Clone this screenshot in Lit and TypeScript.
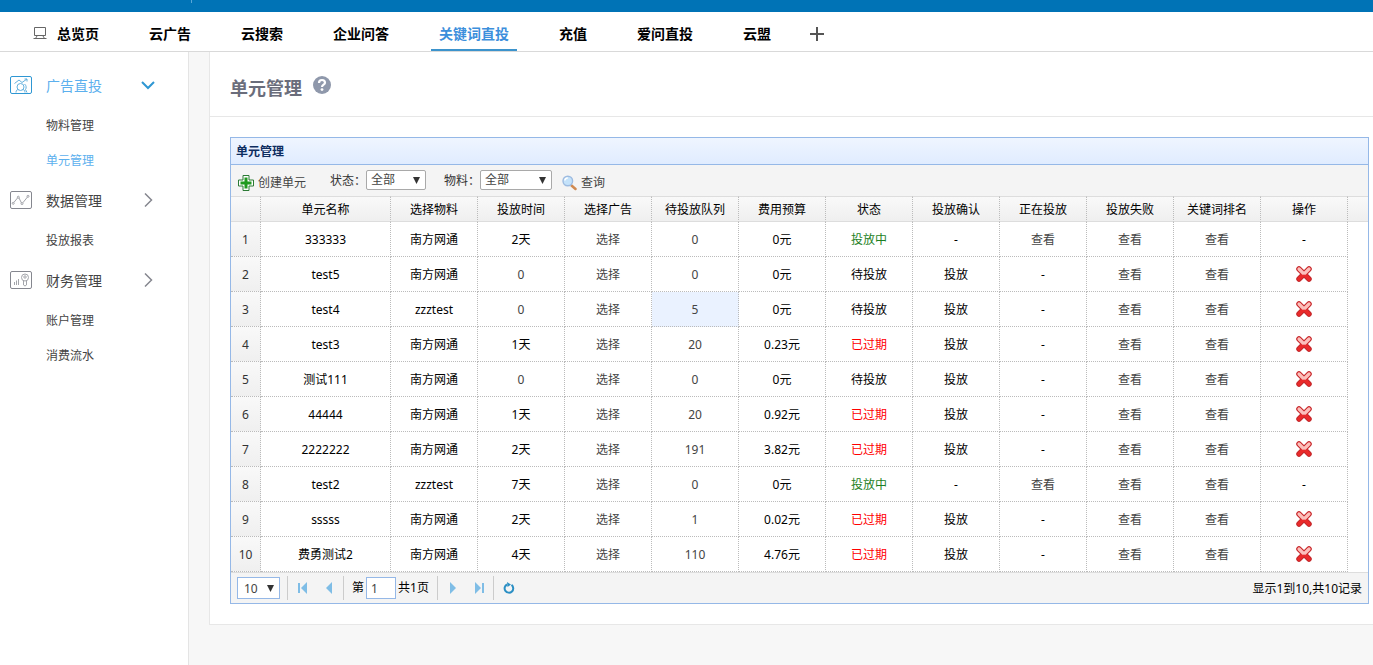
import { LitElement, html, css, svg, nothing } from "lit";
import { customElement, state } from "lit/decorators.js";
import { classMap } from "lit/directives/class-map.js";

interface Unit {
  name: string;
  material: string;
  days: string;
  queue: string;
  budget: string;
  status: "running" | "waiting" | "expired";
}

const STATUS_TEXT = { running: "投放中", waiting: "待投放", expired: "已过期" };

const UNITS: Unit[] = [
  { name: "333333", material: "南方网通", days: "2天", queue: "0", budget: "0元", status: "running" },
  { name: "test5", material: "南方网通", days: "0", queue: "0", budget: "0元", status: "waiting" },
  { name: "test4", material: "zzztest", days: "0", queue: "5", budget: "0元", status: "waiting" },
  { name: "test3", material: "南方网通", days: "1天", queue: "20", budget: "0.23元", status: "expired" },
  { name: "测试111", material: "南方网通", days: "0", queue: "0", budget: "0元", status: "waiting" },
  { name: "44444", material: "南方网通", days: "1天", queue: "20", budget: "0.92元", status: "expired" },
  { name: "2222222", material: "南方网通", days: "2天", queue: "191", budget: "3.82元", status: "expired" },
  { name: "test2", material: "zzztest", days: "7天", queue: "0", budget: "0元", status: "running" },
  { name: "sssss", material: "南方网通", days: "2天", queue: "1", budget: "0.02元", status: "expired" },
  { name: "费勇测试2", material: "南方网通", days: "4天", queue: "110", budget: "4.76元", status: "expired" },
];

const HEADERS = ["单元名称", "选择物料", "投放时间", "选择广告", "待投放队列", "费用预算", "状态", "投放确认", "正在投放", "投放失败", "关键词排名", "操作"];

const TABS = ["总览页", "云广告", "云搜索", "企业问答", "关键词直投", "充值", "爱问直投", "云盟"];

const MENU = [
  { icon: "ads", title: "广告直投", open: true, items: ["物料管理", "单元管理"] },
  { icon: "data", title: "数据管理", open: false, items: ["投放报表"] },
  { icon: "finance", title: "财务管理", open: false, items: ["账户管理", "消费流水"] },
];

const MENU_GLYPHS: Record<string, unknown> = {
  ads: svg`<path d="M4.500 7.500l4.500-3.500 3 2.500 5-3.500M14.500 3H17v2.500"/><circle cx="10.500" cy="11" r="3.500"/><path d="M6 16.500c0-2 1-3 2.500-3M12.500 13.500c1.500 0 2.500 1 2.500 3M14.500 8c2 1.500 2 4 1 5.500l1.500 3"/>`,
  data: svg`<path d="M3.800 11.500L7.500 7M9 7l2.500 5M12.800 11.800L17.500 6"/><circle cx="3.200" cy="12.300" r="1"/><circle cx="8.300" cy="6.200" r="1"/><circle cx="12" cy="12.600" r="1"/><circle cx="18" cy="5.300" r="1"/>`,
  finance: svg`<path d="M4.500 14v-3M6.500 14V9.500M8.500 14V8"/><circle cx="15" cy="6.500" r="3.500"/><circle cx="15" cy="6" r="1.200"/><path d="M13.500 9.500V14l1.500 1 1.500-1V9.500"/>`,
};

@customElement("app-root")
export class AppRoot extends LitElement {
  static styles = css`
    :host {
      display: flex;
      flex-direction: column;
      min-height: 100vh;
      background: #f7f7f7;
      color: #000;
      font: 12px/16px "Noto Sans", "Noto Sans CJK SC", sans-serif;
    }
    * { box-sizing: border-box; }
    a { color: inherit; text-decoration: none; }
    button {
      display: flex;
      align-items: center;
      padding: 0;
      border: 0;
      background: none;
      color: inherit;
      font: inherit;
      cursor: pointer;
    }
    svg { display: block; flex: none; }

    .topbar { height: 12px; padding-left: 191px; background: #0073b6; }
    .mark { width: 1px; height: 3px; background: #5aa7d8; }

    .tabs {
      display: flex;
      align-items: stretch;
      height: 40px;
      padding-left: 33px;
      border-bottom: 1px solid #d9d9d9;
      background: #fff;
      font-size: 14px;
      font-weight: 700;
    }
    .screen { align-self: center; margin-right: 2px; padding-top: 4px; }
    .tab {
      display: flex;
      align-items: center;
      margin-right: 34px;
      padding: 6px 8px 0;
      border-bottom: 2px solid transparent;
      white-space: nowrap;
    }
    .tab.current { color: #3c8fdc; border-color: #3c93cc; }
    .add { margin-left: -3px; padding-top: 4px; }

    .body { display: flex; flex: 1; }
    .side {
      flex: none;
      width: 189px;
      padding-top: 11px;
      border-right: 1px solid #e4e4e4;
      background: #fff;
      color: #444;
    }
    .group {
      display: grid;
      grid-template-columns: 22px 1fr 14px;
      gap: 14px;
      width: 100%;
      height: 45px;
      padding: 0 33px 0 10px;
      font-size: 14px;
      text-align: left;
    }
    .group.open { color: #5cb0ee; }
    .glyph, .chevron { padding-bottom: 1px; color: #85878f; }
    .marks { opacity: 0.75; }
    .open .glyph, .open .chevron { color: #2f97d3; }
    .list { margin: 0; padding: 0; list-style: none; }
    .link { display: flex; align-items: center; height: 35px; padding-left: 46px; }
    .link.current { color: #5cb0ee; }

    .main { flex: 1; min-width: 0; margin-left: 20px; }
    .card { border: 1px solid #e7e7e7; border-width: 0 0 1px 1px; background: #fff; }
    .head {
      display: flex;
      align-items: center;
      gap: 11px;
      height: 65px;
      padding: 7px 20px 0;
      border-bottom: 1px solid #e7e7e7;
    }
    .heading { margin: 0; color: #6a6d7b; font-size: 18px; line-height: 24px; }
    .help { margin-bottom: 5px; }

    .panel { margin: 20px 4px 20px 20px; border: 1px solid #95b8e7; overflow: hidden; }
    .title {
      display: flex;
      align-items: center;
      height: 27px;
      margin: 0;
      padding: 2px 0 0 5px;
      border-bottom: 1px solid #95b8e7;
      background: linear-gradient(#eff5ff, #e0ecff);
      color: #0e2d5f;
      font-size: 12px;
    }
    .tools { display: flex; align-items: center; height: 31px; padding-left: 7px; background: #f4f4f4; color: #444; }
    .tool { gap: 4px; padding-top: 4px; }
    .field { display: flex; align-items: center; color: #333; }
    .status { margin-left: 24px; }
    .material { margin: 0 10px 0 18px; }
    .pick { display: inline-grid; align-items: center; }
    .pick > * { grid-area: 1 / 1; }
    .arrow { justify-self: end; margin-right: 6px; pointer-events: none; }
    select, input {
      height: 20px;
      margin: 0;
      padding: 0 4px;
      border: 1px solid #a9a9a9;
      border-radius: 2px;
      outline: 0;
      background: #fff;
      color: #444;
      font: inherit;
      appearance: none;
    }
    .tools .pick { margin-bottom: 1px; }
    .narrow { width: 60px; }
    .wide { width: 72px; }

    .grid { width: 100%; border-collapse: separate; border-spacing: 0; table-layout: fixed; text-align: center; }
    .c-no { width: 30px; }
    .c-name { width: 130px; }
    .c-std { width: 87px; }
    th, td { padding: 2px 0 0; border-right: 1px dotted #bbb; white-space: nowrap; }
    th {
      height: 26px;
      border-top: 1px solid #ddd;
      border-bottom: 1px solid #ddd;
      background: linear-gradient(#f9f9f9, #efefef);
      font-weight: 400;
    }
    td { height: 35px; border-bottom: 1px dotted #bbb; }
    .rest { border-right: 0; }
    td.rest { border-bottom: 0; }
    .no { background: linear-gradient(#f9f9f9, #efefef); color: #333; }
    .hot { background: #eaf2ff; }
    td a, .zero { color: #444; }
    td a.strong { color: #000; }
    .running { color: #1d7f24; }
    .expired { color: #f00; }
    .remove { margin: 0 auto; padding-bottom: 2px; }

    .pager {
      display: flex;
      align-items: center;
      height: 31px;
      padding: 0 6px;
      border-top: 1px solid #ddd;
      background: #f4f4f4;
    }
    .pager select, .pager input { height: 22px; border-color: #95b8e7; border-radius: 0; }
    .pager .pick { margin-right: 6px; }
    .pager select { width: 43px; padding: 1px 0 0 6px; }
    .pager input { width: 30px; margin: 0 2px; }
    .sep { width: 1px; height: 24px; margin: 0 2px 0 1px; background: #ccc; }
    .step { justify-content: center; width: 26px; height: 26px; }
    .steps { display: flex; }
    .goto { display: flex; align-items: center; padding: 0 7px 0 6px; }
    .total { margin-left: auto; padding-top: 2px; }
  `;

  @state() private currentTab = 4;
  @state() private currentLink = "单元管理";

  private arrow() {
    return html`<svg class="arrow" width="7" height="7" viewBox="0 0 7 7" aria-hidden="true"><path d="M0 0h7L3.500 7z" fill="#333" /></svg>`;
  }

  private renderTabs() {
    return html`
      <nav class="tabs">
        <svg class="screen" width="14" height="17" viewBox="0 0 14 13" fill="none" stroke="#666" aria-hidden="true">
          <path d="M1.500 .5h11v8h-11zM.5 11.500h13M4 9l-1.500 2.500M10 9l1.500 2.500" />
        </svg>
        ${TABS.map(
          (t, i) => html`<a href="#" class=${classMap({ tab: true, current: i === this.currentTab })} @click=${() => (this.currentTab = i)}>${t}</a>`
        )}
        <button class="add" aria-label="添加">
          <svg width="14" height="14" viewBox="0 0 14 14" stroke="#555" stroke-width="2"><path d="M7 0v14M0 7h14" /></svg>
        </button>
      </nav>
    `;
  }

  private renderSide() {
    return html`
      <aside class="side">
        ${MENU.map(
          (g) => html`
            <button class=${classMap({ group: true, open: g.open })}>
              <svg class="glyph" width="22" height="19" viewBox="0 0 22 18" fill="none" stroke="currentColor" aria-hidden="true">
                <rect x=".5" y=".5" width="21" height="17" rx="1.500" />
                <g class="marks">${MENU_GLYPHS[g.icon]}</g>
              </svg>
              <span>${g.title}</span>
              <svg class="chevron" width="14" height="15" viewBox="0 0 14 14" fill="none" stroke="currentColor" stroke-width=${g.open ? 2 : 1.5} aria-hidden="true">
                <path d=${g.open ? "M1 4l6 6 6-6" : "M4 .5L10.500 7 4 13.500"} />
              </svg>
            </button>
            <ul class="list">
              ${g.items.map(
                (name) => html`<li><a href="#" class=${classMap({ link: true, current: name === this.currentLink })} @click=${() => (this.currentLink = name)}>${name}</a></li>`
              )}
            </ul>
          `
        )}
      </aside>
    `;
  }

  private renderTools() {
    return html`
      <div class="tools">
        <button class="tool">
          <svg width="16" height="16" viewBox="0 0 16 16" aria-hidden="true">
            <path d="M5 .5h6V5h4.500v6H11v4.500H5V11H.5V5H5z" fill="#fff" stroke="#2b7a35" />
            <path d="M6.500 2.500h3v4h4v3h-4v4h-3v-4h-4v-3h4z" fill="#1f9a1f" />
          </svg>
          创建单元
        </button>
        <label class="field status">状态：<span class="pick"><select class="narrow"><option>全部</option></select>${this.arrow()}</span></label>
        <label class="field material">物料：<span class="pick"><select class="wide"><option>全部</option></select>${this.arrow()}</span></label>
        <button class="tool">
          <svg width="15" height="16" viewBox="0 0 15 16" aria-hidden="true">
            <path d="M9.500 10.500l4 3.500" stroke="#d08a50" stroke-width="2.500" stroke-linecap="round" />
            <circle cx="5.800" cy="6" r="4.800" fill="#c4e2fa" stroke="#9dbbe0" stroke-width="1.400" />
            <path d="M2.800 5.500a3 3 0 0 1 3-2.500" fill="none" stroke="#fff" stroke-width="1.500" />
          </svg>
          查询
        </button>
      </div>
    `;
  }

  private renderRow(u: Unit, i: number) {
    const running = u.status === "running";
    return html`
      <tr>
        <td class="no">${i + 1}</td>
        <td>${u.name}</td>
        <td>${u.material}</td>
        <td class=${u.days === "0" ? "zero" : nothing}>${u.days}</td>
        <td><a href="#">选择</a></td>
        <td class=${i === 2 ? "hot" : nothing}><a href="#">${u.queue}</a></td>
        <td>${u.budget}</td>
        <td class=${u.status}>${STATUS_TEXT[u.status]}</td>
        <td>${running ? "-" : html`<a class="strong" href="#">投放</a>`}</td>
        <td>${running ? html`<a href="#">查看</a>` : "-"}</td>
        <td><a href="#">查看</a></td>
        <td><a href="#">查看</a></td>
        <td>
          ${running
            ? "-"
            : html`<button class="remove" aria-label="删除">
                <svg width="16" height="16" viewBox="0 0 16 16" aria-hidden="true" stroke-linecap="round">
                  <path d="M3 3l10 10M13 3L3 13" stroke="#c2272b" stroke-width="5.500" />
                  <path d="M3 3l10 10M13 3L3 13" stroke="#ea2a2a" stroke-width="3.600" />
                  <path d="M3 3l4 4M13 3L9 7" stroke="#fbc0bc" stroke-width="3.200" />
                </svg>
              </button>`}
        </td>
        <td class="rest"></td>
      </tr>
    `;
  }

  private renderPager() {
    const step = (label: string, d: string, bar: string) => html`
      <button class="step" aria-label=${label}>
        <svg width="12" height="12" viewBox="0 0 12 12" fill="#7fbde6"><path d=${d} /><path d=${bar} /></svg>
      </button>
    `;
    return html`
      <div class="pager">
        <span class="pick"><select aria-label="每页条数"><option>10</option></select>${this.arrow()}</span>
        <span class="sep"></span>
        <div class="steps">
          ${step("首页", "M10 0v12L4 6z", "M1 1h2v10H1z")}${step("上一页", "M9 0v12L3 6z", "")}
        </div>
        <span class="sep"></span>
        <label class="goto">第<input value="1" />共1页</label>
        <span class="sep"></span>
        <div class="steps">
          ${step("下一页", "M3 0v12l6-6z", "")}${step("末页", "M2 0v12l6-6z", "M9 1h2v10H9z")}
        </div>
        <span class="sep"></span>
        <button class="step" aria-label="刷新">
          <svg width="12" height="12" viewBox="0 0 12 12" fill="none" stroke="#2b8fc4" stroke-width="2">
            <path d="M8.500 2.900A4.300 4.300 0 1 1 4 2.500" /><path d="M4 0l4 2.500L4.500 5z" fill="#2b8fc4" stroke="none" />
          </svg>
        </button>
        <span class="total">显示1到10,共10记录</span>
      </div>
    `;
  }

  render() {
    return html`
      <div class="topbar"><div class="mark"></div></div>
      ${this.renderTabs()}
      <div class="body">
        ${this.renderSide()}
        <main class="main">
          <div class="card">
            <header class="head">
              <h1 class="heading">单元管理</h1>
              <svg class="help" width="18" height="18" viewBox="0 0 18 18" aria-hidden="true">
                <circle cx="9" cy="9" r="9" fill="#8f98ab" />
                <path d="M6 7c0-2 1.300-3 3-3s3 1 3 2.700c0 2-3 2-3 4.300" fill="none" stroke="#fff" stroke-width="2.200" />
                <circle cx="9" cy="13.600" r="1.400" fill="#fff" />
              </svg>
            </header>
            <section class="panel">
              <h2 class="title">单元管理</h2>
              ${this.renderTools()}
              <table class="grid">
                <colgroup>
                  <col class="c-no" />
                  <col class="c-name" />
                  ${HEADERS.slice(1).map(() => html`<col class="c-std" />`)}
                  <col />
                </colgroup>
                <thead>
                  <tr>
                    <th></th>
                    ${HEADERS.map((h) => html`<th>${h}</th>`)}
                    <th class="rest"></th>
                  </tr>
                </thead>
                <tbody>
                  ${UNITS.map((u, i) => this.renderRow(u, i))}
                </tbody>
              </table>
              ${this.renderPager()}
            </section>
          </div>
        </main>
      </div>
    `;
  }
}
